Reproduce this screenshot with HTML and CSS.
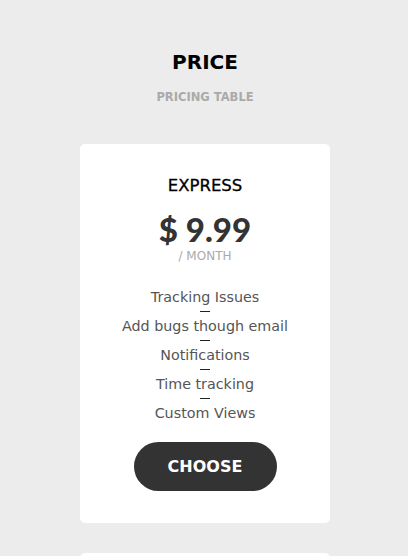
FILE: index.html
```html
<!DOCTYPE html>
<html>
<head>
<meta charset="utf-8">
<link rel="stylesheet" href="styles.css">
</head>
<body>
<main class="page">
  <header class="head">
    <h1 class="title">PRICE</h1>
    <p class="subtitle">PRICING TABLE</p>
  </header>
  <section class="cards">
    <div class="card">
      <h2 class="plan">EXPRESS</h2>
      <div class="price">$ 9.99</div>
      <div class="period">/ MONTH</div>
      <ul class="features">
        <li>Tracking Issues</li>
        <li>Add bugs though email</li>
        <li>Notifications</li>
        <li>Time tracking</li>
        <li>Custom Views</li>
      </ul>
      <button class="choose">CHOOSE</button>
    </div>
    <div class="card"></div>
  </section>
</main>
</body>
</html>
```
FILE: styles.css
```css
html, body {
  margin: 0;
  padding: 0;
  background: #ececec;
}
body {
  font-family: "DejaVu Sans", "Noto Sans", sans-serif;
  color: #333;
}
.page {
  padding-top: 50px;
  padding-left: 2px;
  display: flex;
  flex-direction: column;
  align-items: center;
}
.head {
  text-align: center;
}
.title {
  margin: 0;
  font-size: 20px;
  line-height: 24px;
  font-weight: 700;
  color: #000;
}
.subtitle {
  margin: 16px 0 0;
  font-size: 11.5px;
  line-height: 14px;
  font-weight: 700;
  color: #aaa;
}
.cards {
  margin-top: 40px;
  display: flex;
  flex-direction: column;
  gap: 30px;
}
.card {
  width: 250px;
  box-sizing: border-box;
  background: #fff;
  border-radius: 5px;
  padding: 32px 0 32px;
  display: flex;
  flex-direction: column;
  align-items: center;
  text-align: center;
}
.plan {
  margin: 0;
  font-size: 16.5px;
  line-height: 20px;
  font-weight: 400;
  color: #000;
  -webkit-text-stroke: 0.3px #000;
}
.price {
  margin-top: 14px;
  font-family: "Lato", "DejaVu Sans", sans-serif;
  font-size: 33px;
  line-height: 38px;
  font-weight: 900;
  color: #333;
}
.period {
  margin-top: 1px;
  font-size: 12px;
  line-height: 14px;
  color: #aaa;
}
.features {
  list-style: none;
  margin: 24px 0 0;
  padding: 0;
  font-size: 14.3px;
  line-height: 20px;
  color: #555;
}
.features li + li::before {
  content: "";
  display: block;
  width: 10px;
  height: 1px;
  background: #222;
  margin: 4px auto 4px;
}
.choose {
  margin-top: 19px;
  width: 143px;
  height: 49px;
  border: 0;
  border-radius: 25px;
  background: #333;
  color: #fff;
  font-family: inherit;
  font-size: 16px;
  font-weight: 700;
  cursor: pointer;
}
```
